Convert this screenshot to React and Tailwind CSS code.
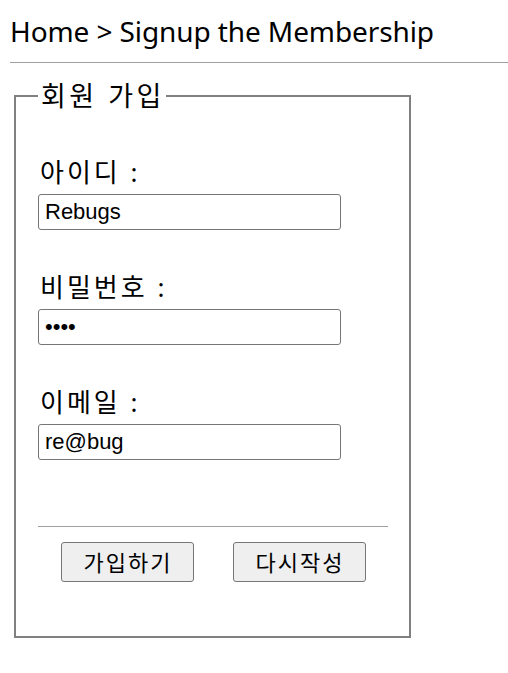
export default function App() {
  const font = { fontFamily: '"Noto Sans", "Noto Sans CJK KR", sans-serif' };
  return (
    <div className="bg-white min-h-[673px] text-black" style={font}>
      {/* breadcrumb */}
      <div className="pl-[10px] pt-[11px] h-[51px] text-[28px] leading-[40px] tracking-[-0.1px]">
        Home &gt; Signup the Membership
      </div>
      <div className="ml-[10px] mt-[11px] border-t border-[#a0a0a0]" />

      <fieldset className="ml-[14px] mt-[19px] w-[397px] border-2 border-[#808080] pl-[22px] pr-[20px] pb-[54px]">
        <legend className="pl-[3px] pr-[1px] text-[27px] leading-[28px] tracking-[3.5px]">회원 가입</legend>

        <div className="flex flex-col pt-[45px]">
          <Field label="아이디 :" type="text" value="Rebugs" />
          <Field label="비밀번호 :" type="password" value="1234" className="mt-[40px]" />
          <Field label="이메일 :" type="text" value="re@bug" className="mt-[40px]" />
        </div>

        <div className="mt-[66px] w-[350px] border-t border-[#a0a0a0]" />
        <div className="mt-[15px] w-[350px] flex justify-center gap-[39px]">
          <button className="w-[133px] h-[40px] bg-[#efefef] border border-[#767676] rounded-[3px] text-[22px] leading-none tracking-[2px] pl-[2px]">
            가입하기
          </button>
          <button className="w-[133px] h-[40px] bg-[#efefef] border border-[#767676] rounded-[3px] text-[22px] leading-none tracking-[2px] pl-[2px]">
            다시작성
          </button>
        </div>
      </fieldset>
    </div>
  );
}

function Field({ label, type, value, className = '' }) {
  return (
    <div className={`flex flex-col ${className}`}>
      <label className="pl-[2px] text-[26px] leading-[34px] tracking-[3px]">{label}</label>
      <input
        type={type}
        defaultValue={value}
        className="mt-[5px] w-[303px] h-[36px] border border-[#767676] rounded-[3px] px-[6px] text-[22px] outline-none"
        style={{ fontFamily: '"Liberation Sans", Arial, sans-serif' }}
      />
    </div>
  );
}
